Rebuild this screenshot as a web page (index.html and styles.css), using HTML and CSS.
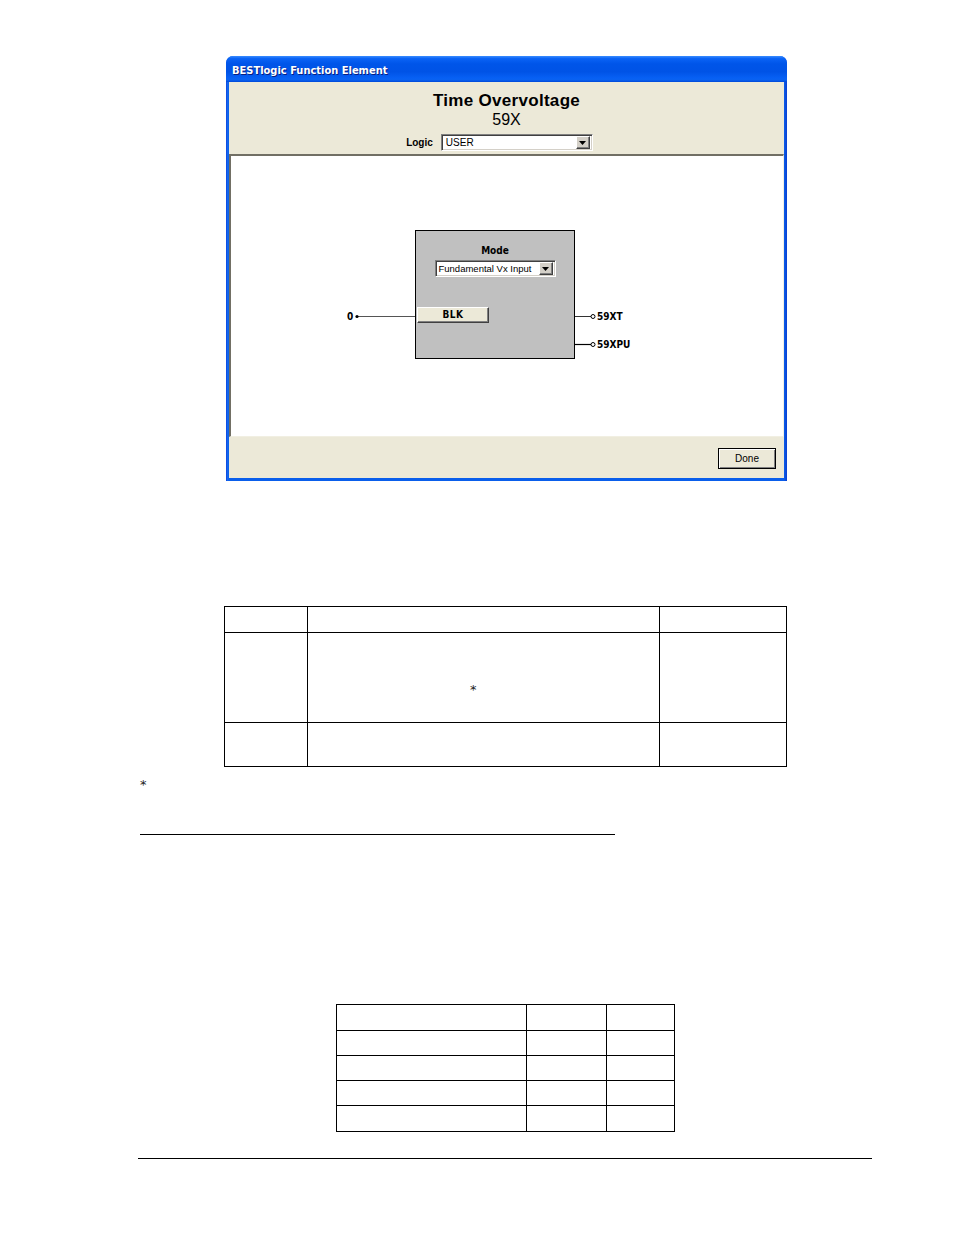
FILE: index.html
```html
<!DOCTYPE html>
<html>
<head>
<meta charset="utf-8">
<link rel="stylesheet" href="styles.css">
</head>
<body>
<div class="page">
  <div class="window">
    <div class="titlebar"><span class="title-text">BESTlogic Function Element</span></div>
    <div class="client">
      <div class="header">
        <div class="h-title">Time Overvoltage</div>
        <div class="h-sub">59X</div>
        <div class="logic-row">
          <span class="logic-label">Logic</span>
          <div class="combo combo-logic">
            <span class="combo-text">USER</span>
            <span class="combo-btn"><svg width="7" height="4" viewBox="0 0 7 4"><path d="M0 0H7L3.5 4Z" fill="#000"/></svg></span>
          </div>
        </div>
      </div>
      <div class="canvas">
        <svg class="wires" width="552" height="280" viewBox="0 0 552 280">
          <line x1="127" y1="160.5" x2="184" y2="160.5" stroke="#555" stroke-width="1"/>
          <circle cx="126" cy="160.5" r="1.6" fill="#000"/>
          <line x1="344" y1="160.5" x2="360" y2="160.5" stroke="#333" stroke-width="1"/>
          <circle cx="362" cy="160.5" r="2" fill="#fff" stroke="#000" stroke-width="1"/>
          <line x1="344" y1="188.5" x2="360" y2="188.5" stroke="#000" stroke-width="1.2"/>
          <circle cx="362" cy="188.5" r="2" fill="#fff" stroke="#000" stroke-width="1"/>
        </svg>
        <span class="pin pin-in">0</span>
        <span class="pin pin-xt">59XT</span>
        <span class="pin pin-xpu">59XPU</span>
        <div class="block">
          <div class="mode-label">Mode</div>
          <div class="combo combo-mode">
            <span class="combo-text">Fundamental Vx Input</span>
            <span class="combo-btn"><svg width="7" height="4" viewBox="0 0 7 4"><path d="M0 0H7L3.5 4Z" fill="#000"/></svg></span>
          </div>
          <div class="blk-btn">BLK</div>
        </div>
      </div>
      <div class="footer">
        <div class="done-btn">Done</div>
      </div>
    </div>
  </div>

  <div class="grid grid-one">
    <div class="cell"></div><div class="cell"></div><div class="cell"></div>
    <div class="cell"></div><div class="cell cell-star"><span class="star">*</span></div><div class="cell"></div>
    <div class="cell"></div><div class="cell"></div><div class="cell"></div>
  </div>

  <div class="note"><span class="star">*</span></div>

  <div class="rule-short"></div>

  <div class="grid grid-two">
    <div class="cell"></div><div class="cell"></div><div class="cell"></div>
    <div class="cell"></div><div class="cell"></div><div class="cell"></div>
    <div class="cell"></div><div class="cell"></div><div class="cell"></div>
    <div class="cell"></div><div class="cell"></div><div class="cell"></div>
    <div class="cell"></div><div class="cell"></div><div class="cell"></div>
  </div>

  <div class="rule-footer"></div>
</div>
</body>
</html>
```
FILE: styles.css
```css
html, body {
  margin: 0;
  padding: 0;
  background: #fff;
}

.page {
  padding-top: 56px;
  font-family: "Liberation Sans", Arial, sans-serif;
  color: #000;
}

/* ---------- XP window ---------- */
.window {
  margin-left: 226px;
  width: 561px;
  height: 425px;
  box-sizing: border-box;
  background: linear-gradient(to right, #0831D9 0, #166AEE 1px, #0A5EEB 3px, #0A5EEB 558px, #0A3FD0 561px);
  border-radius: 7px 7px 0 0;
  padding: 0 3px 3px 3px;
  display: flex;
  flex-direction: column;
}

.titlebar {
  height: 26px;
  margin: 0 -3px;
  border-radius: 7px 7px 0 0;
  background: linear-gradient(to bottom,
    #3A8CFF 0%, #0A63F5 10%, #0055E9 30%, #0053E6 60%,
    #0760F4 85%, #0A62F0 92%, #0048D8 100%);
  display: flex;
  align-items: center;
  padding-left: 6px;
}

.title-text {
  color: #fff;
  font-family: "DejaVu Sans Condensed", "Liberation Sans", sans-serif;
  font-weight: bold;
  font-size: 11px;
  text-shadow: 1px 1px 0 #0A1E80;
  margin-top: 3px;
}

.client {
  flex: 1;
  background: #ECE9D8;
  display: flex;
  flex-direction: column;
}

.header {
  height: 72px;
  box-sizing: border-box;
  padding-top: 9px;
  display: flex;
  flex-direction: column;
  align-items: center;
}

.h-title {
  font-size: 17px;
  font-weight: bold;
  line-height: 19px;
  letter-spacing: 0.3px;
}

.h-sub {
  font-size: 16px;
  line-height: 19px;
}

.logic-row {
  margin-top: 5px;
  display: flex;
  align-items: center;
  gap: 8px;
  padding-right: 14px;
}

.logic-label {
  font-size: 10px;
  font-weight: bold;
  line-height: 16px;
}

/* ---------- combo boxes ---------- */
.combo {
  box-sizing: border-box;
  background: #fff;
  border-top: 1px solid #808080;
  border-left: 1px solid #808080;
  border-right: 1px solid #fff;
  border-bottom: 1px solid #fff;
  box-shadow: inset 1px 1px 0 #404040, inset -1px -1px 0 #D4D0C8;
  display: flex;
  align-items: center;
  padding: 2px;
}

.combo-logic {
  width: 152px;
  height: 17px;
}

.combo-mode {
  width: 121px;
  height: 17px;
  margin: 3px auto 0;
}

.combo-text {
  flex: 1;
  font-size: 10px;
  line-height: 12px;
  padding-left: 2px;
  white-space: nowrap;
  overflow: hidden;
}

.combo-mode .combo-text {
  font-size: 9.5px;
  padding-left: 1px;
}

.combo-btn {
  width: 14px;
  height: 13px;
  box-sizing: border-box;
  background: #D4D0C8;
  border-top: 1px solid #fff;
  border-left: 1px solid #fff;
  border-right: 1px solid #404040;
  border-bottom: 1px solid #404040;
  box-shadow: inset -1px -1px 0 #808080;
  display: flex;
  align-items: center;
  justify-content: center;
}

/* ---------- diagram canvas ---------- */
.canvas {
  position: relative;
  height: 283px;
  box-sizing: border-box;
  background: #fff;
  border-top: 2px solid #716F64;
  border-left: 2px solid #716F64;
  border-right: 1px solid #F1EFE2;
  border-bottom: 1px solid #F1EFE2;
}

.wires {
  position: absolute;
  left: 0;
  top: 0;
}

.pin {
  position: absolute;
  font-family: "DejaVu Sans Condensed", "Liberation Sans", sans-serif;
  font-size: 10px;
  font-weight: bold;
  line-height: 12px;
}

.pin-in { left: 116px; top: 155px; }
.pin-xt { left: 366px; top: 155px; }
.pin-xpu { left: 366px; top: 183px; }

.block {
  position: absolute;
  left: 184px;
  top: 74px;
  width: 160px;
  height: 129px;
  box-sizing: border-box;
  background: #C0C0C0;
  border: 1px solid #000;
  padding-top: 14px;
}

.mode-label {
  text-align: center;
  font-family: "DejaVu Sans Condensed", "Liberation Sans", sans-serif;
  font-size: 10px;
  font-weight: bold;
  line-height: 12px;
}

.blk-btn {
  margin: 30px 0 0 1px;
  width: 72px;
  height: 16px;
  box-sizing: border-box;
  background: #ECE9D8;
  border-top: 1px solid #fff;
  border-left: 1px solid #fff;
  border-right: 1px solid #404040;
  border-bottom: 1px solid #404040;
  box-shadow: inset -1px -1px 0 #808080;
  text-align: center;
  font-family: "DejaVu Sans Condensed", "Liberation Sans", sans-serif;
  font-size: 10px;
  font-weight: bold;
  line-height: 14px;
  letter-spacing: 0.5px;
}

/* ---------- footer ---------- */
.footer {
  flex: 1;
  display: flex;
  justify-content: flex-end;
  align-items: flex-start;
  padding: 11px 8px 0 0;
}

.done-btn {
  width: 58px;
  height: 21px;
  box-sizing: border-box;
  background: #ECE9D8;
  border: 1px solid #000;
  box-shadow: inset 1px 1px 0 #fff, inset -1px -1px 0 #808080;
  text-align: center;
  font-size: 10px;
  line-height: 19px;
}

/* ---------- tables ---------- */
.grid {
  display: grid;
  gap: 1px;
  background: #000;
  border: 1px solid #000;
}

.cell {
  background: #fff;
}

.grid-one {
  margin: 125px 0 0 224px;
  width: 563px;
  box-sizing: border-box;
  grid-template-columns: 82px 351px 126px;
  grid-template-rows: 25px 89px 43px;
}

.cell-star {
  padding: 47px 0 0 162px;
  box-sizing: border-box;
}

.star {
  font-family: "DejaVu Sans", sans-serif;
  font-size: 13px;
  line-height: 11px;
  color: #222;
}

.note {
  margin: 10px 0 0 140px;
  height: 13px;
  line-height: 13px;
}

.rule-short {
  margin: 44px 0 0 140px;
  width: 475px;
  height: 0;
  border-top: 1px solid #000;
}

.grid-two {
  margin: 169px 0 0 336px;
  width: 339px;
  box-sizing: border-box;
  grid-template-columns: 189px 79px 67px;
  grid-template-rows: 25px 24px 24px 24px 25px;
}

.rule-footer {
  margin: 26px 0 0 138px;
  width: 734px;
  height: 0;
  border-top: 1px solid #000;
}
```
